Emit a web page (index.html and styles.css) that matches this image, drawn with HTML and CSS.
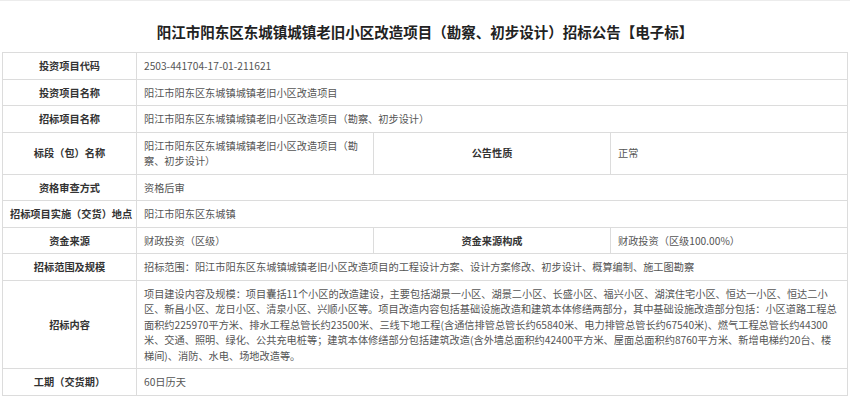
FILE: index.html
```html
<!DOCTYPE html>
<html lang="zh-CN">
<head>
<meta charset="utf-8">
<title>招标公告</title>
<link rel="stylesheet" href="styles.css">
</head>
<body>
<div class="page">
  <header class="head">
    <h1 class="title">阳江市阳东区东城镇城镇老旧小区改造项目（勘察、初步设计）招标公告【电子标】</h1>
  </header>
  <table class="info">
    <colgroup>
      <col class="c-label">
      <col class="c-val">
      <col class="c-val">
      <col class="c-val">
    </colgroup>
    <tbody>
      <tr>
        <th class="lbl">投资项目代码</th>
        <td class="val" colspan="3">2503-441704-17-01-211621</td>
      </tr>
      <tr>
        <th class="lbl">投资项目名称</th>
        <td class="val" colspan="3">阳江市阳东区东城镇城镇老旧小区改造项目</td>
      </tr>
      <tr>
        <th class="lbl">招标项目名称</th>
        <td class="val" colspan="3">阳江市阳东区东城镇城镇老旧小区改造项目（勘察、初步设计）</td>
      </tr>
      <tr>
        <th class="lbl">标段（包）名称</th>
        <td class="val">阳江市阳东区东城镇城镇老旧小区改造项目（勘察、初步设计）</td>
        <th class="lbl">公告性质</th>
        <td class="val">正常</td>
      </tr>
      <tr>
        <th class="lbl">资格审查方式</th>
        <td class="val" colspan="3">资格后审</td>
      </tr>
      <tr>
        <th class="lbl">招标项目实施（交货）地点</th>
        <td class="val" colspan="3">阳江市阳东区东城镇</td>
      </tr>
      <tr>
        <th class="lbl">资金来源</th>
        <td class="val">财政投资（区级）</td>
        <th class="lbl">资金来源构成</th>
        <td class="val">财政投资（区级100.00%）</td>
      </tr>
      <tr>
        <th class="lbl">招标范围及规模</th>
        <td class="val" colspan="3">招标范围：阳江市阳东区东城镇城镇老旧小区改造项目的工程设计方案、设计方案修改、初步设计、概算编制、施工图勘察</td>
      </tr>
      <tr>
        <th class="lbl">招标内容</th>
        <td class="val lines" colspan="3">项目建设内容及规模：项目囊括11个小区的改造建设，主要包括湖景一小区、湖景二小区、长盛小区、福兴小区、湖滨住宅小区、恒达一小区、恒达二小<br>区、新昌小区、龙日小区、清泉小区、兴顺小区等。项目改造内容包括基础设施改造和建筑本体修缮两部分，其中基础设施改造部分包括：小区道路工程总<br>面积约225970平方米、排水工程总管长约23500米、三线下地工程(含通信排管总管长约65840米、电力排管总管长约67540米)、燃气工程总管长约44300<br>米、交通、照明、绿化、公共充电桩等；建筑本体修缮部分包括建筑改造(含外墙总面积约42400平方米、屋面总面积约8760平方米、新增电梯约20台、楼<br>梯间)、消防、水电、场地改造等。</td>
      </tr>
      <tr>
        <th class="lbl">工期（交货期）</th>
        <td class="val" colspan="3">60日历天</td>
      </tr>
      <tr>
        <th class="lbl">&nbsp;</th>
        <td class="val" colspan="3">&nbsp;</td>
      </tr>
    </tbody>
  </table>
</div>
</body>
</html>
```

FILE: styles.css
```css
html, body {
  margin: 0;
  padding: 0;
  background: #ffffff;
}

body {
  font-family: "Noto Sans CJK SC", "Noto Sans", sans-serif;
  color: #444;
}

.page {
  width: 850px;
  height: 396px;
  overflow: hidden;
}

.head {
  border-top: 1px solid #ececec;
  height: 52px;
  box-sizing: border-box;
  padding-top: 22px;
  text-align: center;
}

.title {
  margin: 0;
  font-size: 14.5px;
  line-height: 18px;
  font-weight: 700;
  color: #222;
  letter-spacing: 0;
}

.info {
  margin-left: 2px;
  width: 846px;
  border-collapse: collapse;
  table-layout: fixed;
  font-size: 10.2px;
  line-height: 15.5px;
}

.c-label {
  width: 134px;
}

.c-val {
  width: 237px;
}

.info th,
.info td {
  border: 1px solid #dcdcdc;
  padding: 5px 7px;
  vertical-align: middle;
}

.lbl {
  text-align: center;
  font-weight: 700;
  color: #333;
  padding-left: 2px;
  padding-right: 2px;
  white-space: nowrap;
}

.val {
  text-align: left;
  color: #555;
  font-weight: 400;
}

.lines {
  white-space: nowrap;
}
```
